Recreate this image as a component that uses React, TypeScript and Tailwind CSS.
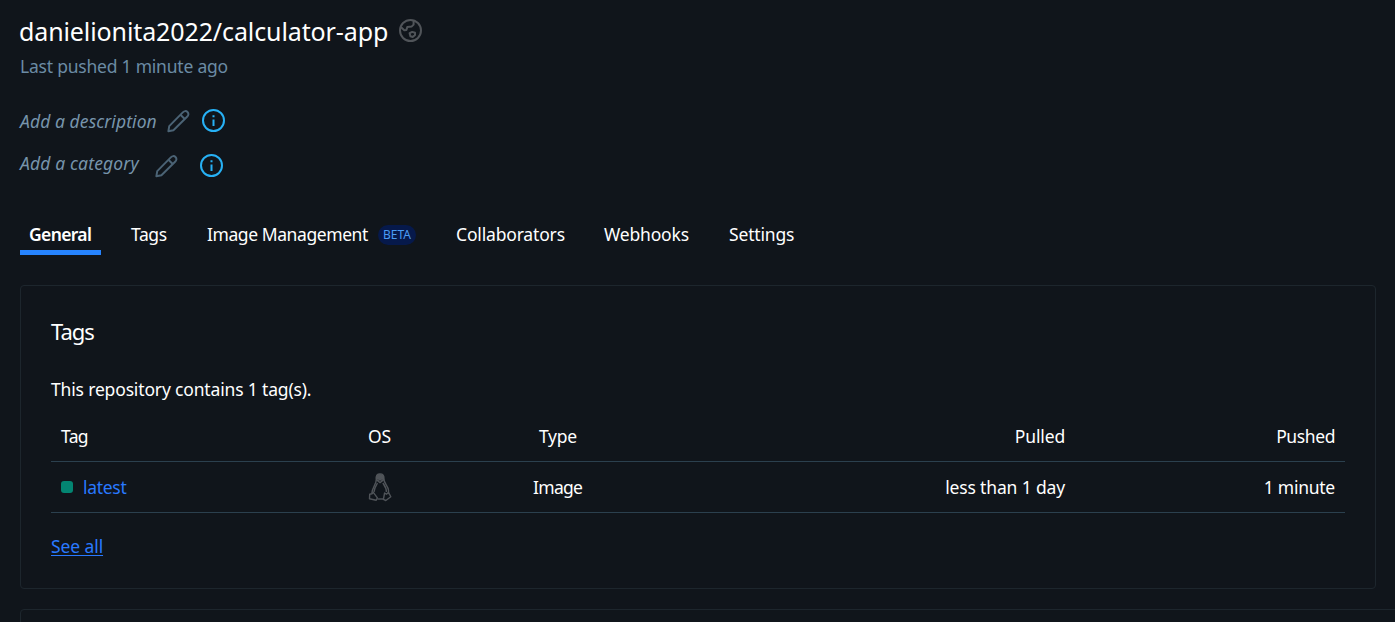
import type { ReactNode } from "react";

function GlobeIcon() {
  return (
    <svg width="23" height="23" viewBox="0 0 23 23" fill="none" stroke="#505459" strokeWidth="2" strokeLinejoin="round">
      <circle cx="11.5" cy="11.5" r="10.5" />
      <path d="M14.6 1.6V5.6L12.8 7.4L8.3 8L7.4 11L5.3 11.2L1.8 8" />
      <path d="M10.6 14.2L13.2 12.9L16 13.8V16L13.7 18L11.4 17.2Z" />
    </svg>
  );
}

function PencilIcon() {
  return (
    <svg className="mr-px" width="23" height="23" viewBox="0.4 0.4 23.6 23.6" fill="none" stroke="#4b6375" strokeWidth="2" strokeLinejoin="round">
      <path d="M1.8 22.2L2.7 17L16.6 2.9C18.2 1.3 20 1 21.4 2.4C22.9 3.9 22.6 5.7 21 7.3L7 21.2Z" />
      <path d="M14.2 5.3L18.6 9.7" />
    </svg>
  );
}

function InfoIcon() {
  return (
    <svg width="24" height="24" viewBox="0 0 24 24" fill="none" stroke="#27b1f5" strokeWidth="2">
      <circle cx="11.5" cy="11.5" r="10.5" />
      <path d="M11.5 10.5V17M11.5 6.2V8.2" />
    </svg>
  );
}

function LinuxIcon() {
  return (
    <svg width="24" height="30" viewBox="0 0 24 30" fill="none" stroke="#505459" strokeWidth="1.4" strokeLinejoin="round">
      <path d="M8.3 7.5C7.8 3.2 9.3 1.9 12 1.9C14.8 1.9 16.2 3.4 15.9 7C15.8 11 20 14 20.5 18C20.7 19.3 20.5 20.7 20 22" />
      <path d="M8.3 7.5C8.6 12 4.2 15 3.8 21.5" />
      <path d="M8.8 3.8C9.5 2.2 14.3 2 15.3 4.2L15.6 8L14 6.3L12 7.2L9.7 6.2L8.5 8Z" fill="#505459" />
      <path d="M9.3 8.5L12 10.6L14.8 8.5L12 7.5Z" />
      <path d="M9.5 11C8 13.5 6.2 16 6 20M14.9 11C16.5 13.5 18.6 16 18.4 20" />
      <path d="M5.3 20.4L9.4 25.8L8.2 28.2L1.5 26.7L1.7 22.3L4 21.8Z" />
      <path d="M16.6 21L18.4 22.2L20.6 20.5L22.8 24.8L17.8 28.5L15.4 27.4Z" />
      <path d="M9.4 27H15.4" />
    </svg>
  );
}

function Tab({ className, children }: { className: string; children: ReactNode }) {
  return <a className={`flex h-10 shrink-0 items-center whitespace-nowrap ${className}`}>{children}</a>;
}

export default function App() {
  return (
    <div className="h-[622px] overflow-hidden bg-[#10151b] pl-5 font-['Noto_Sans','Open_Sans',sans-serif] text-[17.5px] leading-7 text-white">
      <header className="pt-[15px]">
        <div className="flex h-[31px] items-center">
          <h1 className="-ml-px w-[380px] whitespace-nowrap text-[25px] tracking-[-0.11px]">danielionita2022/calculator-app</h1>
          <GlobeIcon />
        </div>
        <p className="mt-[6px] h-7 tracking-[-0.22px] text-[#6b8ba4]">Last pushed 1 minute ago</p>
        <div className="mt-[27px] flex h-7 items-center text-[#7794ab]">
          <span className="w-[147px] whitespace-nowrap italic tracking-[0.08px]">Add a description</span>
          <PencilIcon />
          <span className="ml-[11px]"><InfoIcon /></span>
        </div>
        <div className="mt-[14px] flex h-7 items-center text-[#7794ab]">
          <span className="w-[135px] whitespace-nowrap italic tracking-[0.15px]">Add a category</span>
          <span className="pt-[6px]"><PencilIcon /></span>
          <span className="ml-[21px] pt-[6px]"><InfoIcon /></span>
        </div>
      </header>

      <nav className="mt-[38px] flex h-10">
        <Tab className="w-[81px] border-b-5 border-[#2684ff] pl-[9px] pt-[3px] font-semibold tracking-[-0.65px]">General</Tab>
        <Tab className="ml-[30px] w-[76px] pb-[2px] tracking-[-0.4px]">Tags</Tab>
        <Tab className="w-[249px] pb-[2px]">
          <span className="w-[171px] shrink-0 tracking-[-0.42px]">Image Management</span>
          <span className="mt-px flex h-5 w-[38px] shrink-0 items-center justify-center rounded-full bg-[#06194b] text-[12px] text-[#4b9cf5]">BETA</span>
        </Tab>
        <Tab className="w-[148px] pb-[2px] tracking-[-0.17px]">Collaborators</Tab>
        <Tab className="w-[125px] pb-[2px] tracking-[-0.17px]">Webhooks</Tab>
        <Tab className="pb-[2px] tracking-[-0.17px]">Settings</Tab>
      </nav>

      <section className="mt-[30px] h-[304px] w-[1356px] rounded-[4px] border border-[#1d262d] px-[30px]">
        <h2 className="mt-[29px] h-8 text-[22px] leading-8 tracking-[-1px]">Tags</h2>
        <p className="mt-[28px] h-7 tracking-[-0.16px]">This repository contains 1 tag(s).</p>
        <table className="mt-2 w-full table-fixed border-collapse tracking-[-0.15px]">
          <colgroup>
            <col className="w-[307px]" />
            <col className="w-[165px]" />
            <col className="w-[252px]" />
            <col className="w-[300px]" />
            <col />
          </colgroup>
          <thead>
            <tr className="h-[50px] border-b border-[#2b404e]">
              <th className="pl-[10px] text-left font-normal tracking-[-0.7px]">Tag</th>
              <th className="pl-[10px] text-left font-normal">OS</th>
              <th className="pl-4 text-left font-normal tracking-[-0.3px]">Type</th>
              <th className="pr-[10px] text-right font-normal">Pulled</th>
              <th className="pr-[10px] text-right font-normal tracking-[-0.4px]">Pushed</th>
            </tr>
          </thead>
          <tbody>
            <tr className="h-[51px] border-b border-[#2b404e]">
              <td className="pl-[10px]">
                <div className="flex items-center">
                  <span className="size-3 rounded-[3px] bg-[#038572]" />
                  <a className="ml-[10px] tracking-[-0.3px] text-[#2979ff]">latest</a>
                </div>
              </td>
              <td className="pl-[10px]"><LinuxIcon /></td>
              <td className="pl-[10px] tracking-[-0.7px]">Image</td>
              <td className="pr-[10px] text-right">less than 1 day</td>
              <td className="pr-[10px] text-right tracking-[-0.25px]">1 minute</td>
            </tr>
          </tbody>
        </table>
        <a className="mt-[19px] inline-block tracking-[-0.1px] text-[#2979ff] underline underline-offset-2">See all</a>
      </section>

      <section className="mt-5 h-20 w-[1400px] rounded-[4px] border border-[#1d262d]" />
    </div>
  );
}
